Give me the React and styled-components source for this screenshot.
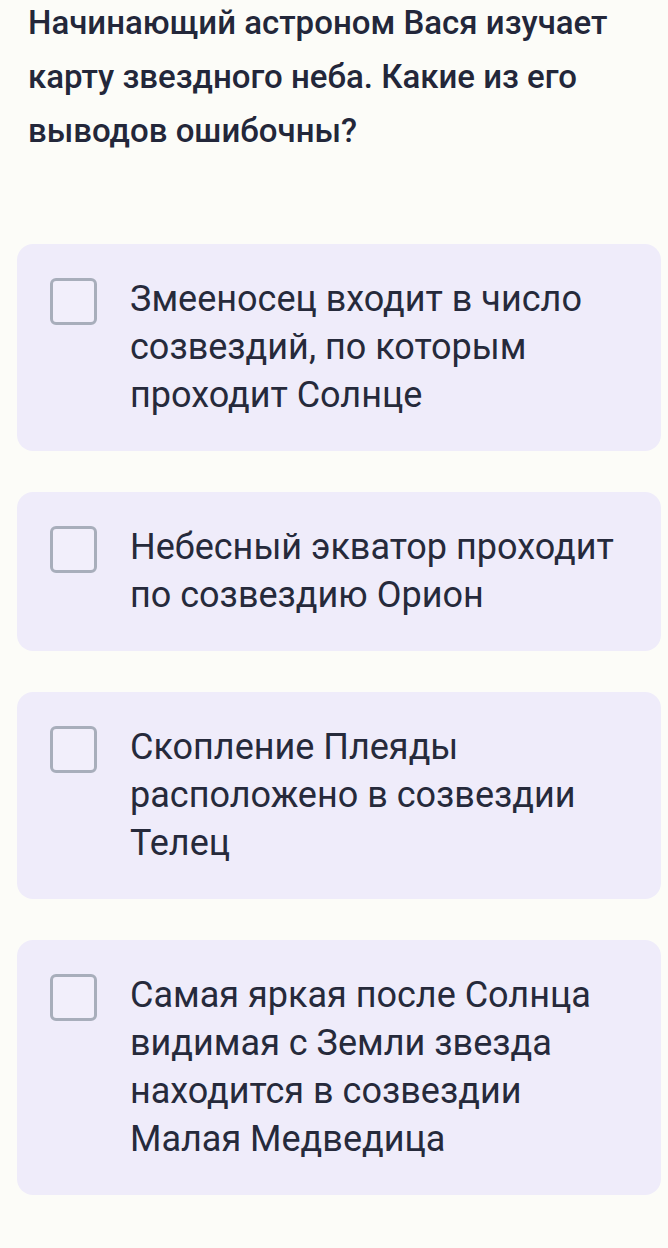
import React from "react";
import styled, { createGlobalStyle } from "styled-components";

const Global = createGlobalStyle`
  html, body { margin: 0; padding: 0; background: #fcfcf8; }
  body { font-family: Roboto, "Noto Sans", sans-serif; }
`;

const Page = styled.div`
  width: 668px;
  min-height: 1248px;
  box-sizing: border-box;
  padding: 0 7px 0 17px;
  background: #fcfcf8;
  overflow: hidden;
`;

const Question = styled.h1`
  margin: -4px 20px 0 11px;
  font-size: 33px;
  line-height: 54px;
  font-weight: 500;
  color: #23273a;
`;

const List = styled.div`
  display: flex;
  flex-direction: column;
  gap: 41px;
  margin-top: 86px;
`;

const Card = styled.label`
  display: flex;
  align-items: flex-start;
  gap: 33px;
  background: #efecfa;
  border-radius: 16px;
  padding: 31px 32px 32px 33px;
  cursor: pointer;
`;

const Box = styled.span`
  flex: none;
  width: 41px;
  height: 41px;
  margin-top: 3px;
  border: 3px solid #a8aebb;
  border-radius: 6px;
  background: #f2effb;
`;

const Text = styled.span`
  font-size: 36px;
  line-height: 48px;
  color: #262a3b;
`;

const options = [
  "Змееносец входит в число созвездий, по которым проходит Солнце",
  "Небесный экватор проходит по созвездию Орион",
  "Скопление Плеяды расположено в созвездии Телец",
  "Самая яркая после Солнца видимая с Земли звезда находится в созвездии Малая Медведица",
];

export default function App() {
  return (
    <Page>
      <Global />
      <Question>Начинающий астроном Вася изучает карту звездного неба. Какие из его выводов ошибочны?</Question>
      <List>
        {options.map((o) => (
          <Card key={o}>
            <Box />
            <Text>{o}</Text>
          </Card>
        ))}
      </List>
    </Page>
  );
}
